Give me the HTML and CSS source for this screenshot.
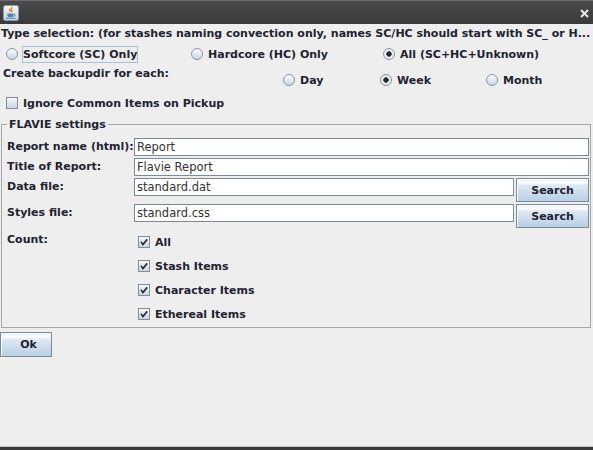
FILE: index.html
```html
<!DOCTYPE html>
<html>
<head>
<meta charset="utf-8">
<link rel="stylesheet" href="styles.css">
</head>
<body>
<div class="titlebar">
  <svg class="app-icon" viewBox="0 0 16 16" width="16" height="16">
    <defs>
      <linearGradient id="ig" x1="0" y1="0" x2="0" y2="1">
        <stop offset="0" stop-color="#f6f8fb"/>
        <stop offset="1" stop-color="#c4d2e1"/>
      </linearGradient>
    </defs>
    <rect x="0.5" y="0.5" width="15" height="15" rx="2" fill="url(#ig)" stroke="#8a9bb0"/>
    <path d="M8.6 2.2c1 1.4-1.6 2.4-.6 3.9.5.7 1.3.5 1.1-.4" stroke="#e76f00" stroke-width="1.3" fill="none"/>
    <path d="M7 3.6c-1.4 1.1.4 2-.3 3.1" stroke="#e76f00" stroke-width="1" fill="none"/>
    <path d="M4.3 8.6h6.2v1.6c0 1.2-1.1 1.9-3.1 1.9s-3.1-.7-3.1-1.9z" fill="#5382a1"/>
    <path d="M10.5 9.1h.8a1 1 0 0 1 0 2h-.8" stroke="#5382a1" stroke-width="0.9" fill="none"/>
    <path d="M3 13.2h9.5" stroke="#5382a1" stroke-width="1"/>
  </svg>
  <svg class="close" viewBox="0 0 9 9" width="9" height="9">
    <path d="M1 1L8 8M8 1L1 8" stroke="#e8e8e8" stroke-width="2"/>
  </svg>
</div>

<div class="content">
  <div class="hint">Type selection: (for stashes naming convection only, names SC/HC should start with SC_ or H...</div>

  <div class="type-row">
    <div class="opt"><span class="radio"></span><span class="text focus">Softcore (SC) Only</span></div>
    <div class="opt"><span class="radio"></span><span class="text">Hardcore (HC) Only</span></div>
    <div class="opt"><span class="radio on"></span><span class="text">All (SC+HC+Unknown)</span></div>
  </div>

  <div class="backup-row">
    <span class="row-label">Create backupdir for each:</span>
    <div class="opt"><span class="radio"></span><span class="text">Day</span></div>
    <div class="opt"><span class="radio on"></span><span class="text">Week</span></div>
    <div class="opt"><span class="radio"></span><span class="text">Month</span></div>
  </div>

  <div class="ignore-row">
    <div class="opt"><span class="check"></span><span class="text">Ignore Common Items on Pickup</span></div>
  </div>

  <fieldset class="group">
    <legend>FLAVIE settings</legend>
    <div class="form">
      <span class="lbl">Report name (html):</span>
      <input class="field wide" type="text" value="Report">

      <span class="lbl">Title of Report:</span>
      <input class="field wide" type="text" value="Flavie Report">

      <span class="lbl">Data file:</span>
      <input class="field" type="text" value="standard.dat">
      <button class="btn">Search</button>

      <span class="lbl">Styles file:</span>
      <input class="field" type="text" value="standard.css">
      <button class="btn">Search</button>

      <span class="lbl count">Count:</span>
      <div class="checks">
        <div class="opt"><span class="check"><svg viewBox="0 0 10 10" width="10" height="10"><polyline points="2,4.6 3.9,7.6 8.2,2.4" fill="none" stroke="#2e2e2e" stroke-width="1.7"/></svg></span><span class="text">All</span></div>
        <div class="opt"><span class="check"><svg viewBox="0 0 10 10" width="10" height="10"><polyline points="2,4.6 3.9,7.6 8.2,2.4" fill="none" stroke="#2e2e2e" stroke-width="1.7"/></svg></span><span class="text">Stash Items</span></div>
        <div class="opt"><span class="check"><svg viewBox="0 0 10 10" width="10" height="10"><polyline points="2,4.6 3.9,7.6 8.2,2.4" fill="none" stroke="#2e2e2e" stroke-width="1.7"/></svg></span><span class="text">Character Items</span></div>
        <div class="opt"><span class="check"><svg viewBox="0 0 10 10" width="10" height="10"><polyline points="2,4.6 3.9,7.6 8.2,2.4" fill="none" stroke="#2e2e2e" stroke-width="1.7"/></svg></span><span class="text">Ethereal Items</span></div>
      </div>
    </div>
  </fieldset>

  <button class="btn ok">Ok</button>
</div>

<div class="frame-bottom"></div>
</body>
</html>
```

FILE: styles.css
```css
* { box-sizing: border-box; }

html, body { margin: 0; padding: 0; }

body {
  width: 593px;
  height: 450px;
  overflow: hidden;
  background: #eeeeee;
  font: bold 11px "DejaVu Sans", "Liberation Sans", sans-serif;
  color: #222230;
  display: flex;
  flex-direction: column;
}

.titlebar {
  flex: none;
  height: 24px;
  display: flex;
  align-items: center;
  justify-content: space-between;
  padding: 0 4px 0 3px;
  background: linear-gradient(#4b4b4b, #3a3a3a);
  box-shadow: inset 0 1px #6c6c6c;
}

.app-icon { display: block; margin-top: 1px; }
.close { display: block; margin-top: 2px; }

.content {
  flex: 1;
  display: flex;
  flex-direction: column;
  align-items: flex-start;
}

.hint {
  width: 100%;
  height: 20px;
  line-height: 20px;
  padding-left: 1px;
  white-space: nowrap;
  overflow: hidden;
}

.opt {
  display: flex;
  align-items: center;
  gap: 4px;
  white-space: nowrap;
}

.opt .text {
  line-height: 15px;
  border: 1px solid transparent;
}

.opt .text.focus { border-color: #a8c0d8; }

.radio {
  flex: none;
  width: 12px;
  height: 12px;
  border-radius: 50%;
  border: 1px solid #8697aa;
  background: linear-gradient(#fbfcfd, #cbd6e2);
}

.radio.on {
  background: radial-gradient(circle at 50% 50%, #2a2a2a 0, #2a2a2a 2.4px, #eef2f6 3px, #d3dce6 100%);
}

.check {
  flex: none;
  width: 12px;
  height: 12px;
  border: 1px solid #7d8fa3;
  background: linear-gradient(#f6f8fb, #c9d6e3);
  display: flex;
  align-items: center;
  justify-content: center;
}

.check svg { display: block; }

.type-row {
  width: 100%;
  height: 20px;
  display: grid;
  grid-template-columns: 185px 192px auto;
  align-items: center;
  padding-left: 6px;
}

.backup-row {
  width: 100%;
  height: 26px;
  display: grid;
  grid-template-columns: 280px 97px 106px auto;
  align-items: start;
  padding-left: 3px;
}

.backup-row .row-label { line-height: 20px; }
.backup-row .opt { height: 20px; margin-top: 6px; }

.ignore-row {
  margin-top: 3px;
  height: 20px;
  display: flex;
  align-items: center;
  padding-left: 6px;
}

.group {
  align-self: stretch;
  min-width: 0;
  margin: 4px 2px 0 1px;
  padding: 6px 1px 1px 5px;
  border: 1px solid #a6a6a6;
}

.group legend {
  padding: 0 2px;
  line-height: 15px;
}

.form {
  display: grid;
  grid-template-columns: 125px 1fr 73px;
  column-gap: 2px;
  row-gap: 2px;
  align-items: start;
}

.lbl {
  line-height: 17px;
  white-space: nowrap;
}

.lbl.count { padding-top: 1px; }

.field {
  height: 18px;
  margin: 0;
  padding: 0 2px;
  border: 1px solid #7a8a99;
  background: #ffffff;
  font: 11.5px "DejaVu Sans", "Liberation Sans", sans-serif;
  color: #333333;
  outline: none;
  min-width: 0;
  width: 100%;
}

.field.wide { grid-column: 2 / 4; }

.btn {
  height: 24px;
  margin: 0;
  padding: 0;
  border: 1px solid #7a8a99;
  background: linear-gradient(#dde8f3 0%, #ffffff 15%, #dde8f3 30%, #b8cfe5 100%);
  box-shadow: inset 1px 1px #ffffff;
  font: bold 11px "DejaVu Sans", "Liberation Sans", sans-serif;
  color: #222230;
}

.checks {
  grid-column: 2 / 4;
  display: flex;
  flex-direction: column;
  padding-left: 4px;
}

.checks .opt { height: 24px; }

.ok {
  width: 52px;
  height: 25px;
  margin-top: 4px;
  padding-left: 5px;
}

.frame-bottom {
  flex: none;
  height: 4px;
  border-top: 1px solid #c6c6c6;
  background: #3a3a3a;
}
```
